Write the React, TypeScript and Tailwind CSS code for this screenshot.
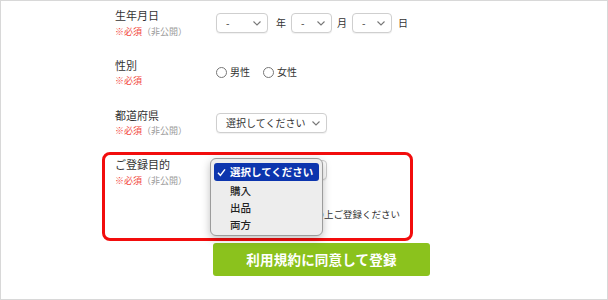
import React from "react";

const Chevron = () => (
  <svg width="8" height="5" viewBox="0 0 8 5" className="shrink-0">
    <polyline points="0.5,0.5 4,4 7.5,0.5" fill="none" stroke="#777" strokeWidth="1.1" />
  </svg>
);

const FakeSelect = ({ w, text }: { w: string; text: string }) => (
  <div
    className={`${w} h-[20px] border border-[#cfcfcf] rounded-[4px] bg-white flex items-center justify-between pl-[9px] pr-[6px] shadow-[0_1px_1px_rgba(0,0,0,0.06)]`}
  >
    <span className="text-[10px] leading-none text-[#333] whitespace-nowrap">{text}</span>
    <Chevron />
  </div>
);

const Required = ({ secret = true }: { secret?: boolean }) => (
  <div className="text-[9px] leading-[14px] whitespace-nowrap">
    <span className="text-[#f2463c]">※必須</span>
    {secret && <span className="text-[#9a9a9a]">（非公開）</span>}
  </div>
);

const Label = ({ text }: { text: string }) => (
  <div className="text-[11px] leading-[18px] text-[#333]">{text}</div>
);

const Radio = ({ label }: { label: string }) => (
  <div className="flex items-center gap-[3px]">
    <div className="w-[11px] h-[11px] rounded-full border border-[#777] bg-white" />
    <span className="text-[10px] leading-[18px] text-[#333]">{label}</span>
  </div>
);

export default function App() {
  return (
    <div
      className="relative w-[608px] h-[300px] border border-[#d8d8d8] bg-white overflow-hidden"
      style={{ fontFamily: '"Noto Sans CJK JP", "Noto Sans", sans-serif' }}
    >
      <div className="pl-[114px]">
        {/* Row 1 */}
        <div className="flex items-start h-[50px]">
          <div className="w-[101px] pt-[5px]">
            <Label text="生年月日" />
            <div className="mt-[1px]">
              <Required />
            </div>
          </div>
          <div className="pt-[12px] flex items-start">
            <FakeSelect w="w-[52px]" text="-" />
            <span className="ml-[8px] text-[10px] leading-[20px] text-[#333]">年</span>
            <div className="ml-[5px]">
              <FakeSelect w="w-[41px]" text="-" />
            </div>
            <span className="ml-[5px] text-[10px] leading-[20px] text-[#333]">月</span>
            <div className="ml-[5px]">
              <FakeSelect w="w-[40px]" text="-" />
            </div>
            <span className="ml-[6px] text-[10px] leading-[20px] text-[#333]">日</span>
          </div>
        </div>

        {/* Row 2 */}
        <div className="flex items-start h-[50px]">
          <div className="w-[101px] pt-[5px]">
            <Label text="性別" />
            <Required secret={false} />
          </div>
          <div className="pt-[12px] flex items-center gap-[13px]">
            <Radio label="男性" />
            <Radio label="女性" />
          </div>
        </div>

        {/* Row 3 */}
        <div className="flex items-start h-[50px]">
          <div className="w-[101px] pt-[5px]">
            <Label text="都道府県" />
            <Required />
          </div>
          <div className="pt-[12px]">
            <FakeSelect w="w-[111px]" text="選択してください" />
          </div>
        </div>

        {/* Row 4 highlighted */}
        <div className="-ml-[13px] mt-[1px] w-[311px] h-[89px] border-[3px] border-[#f20d0d] rounded-[8px] pl-[10px] flex items-start">
          <div className="w-[101px]">
            <Label text="ご登録目的" />
            <div className="mt-[1px]">
              <Required />
            </div>
          </div>
          <div className="flex-1 pt-[5px] pr-[10px]">
            <FakeSelect w="w-[111px]" text="" />
            <div className="mt-[26px] text-right text-[9.5px] leading-[16px] text-[#333] whitespace-nowrap">
              の上ご登録ください
            </div>
          </div>
        </div>

        {/* Button */}
        <div className="ml-[98px] mt-[2px] w-[217px] h-[33px] rounded-[3px] bg-[#8bc21d] flex items-center justify-center">
          <span className="text-white font-bold text-[13.5px] tracking-[0.2px]">利用規約に同意して登録</span>
        </div>
      </div>

      {/* Dropdown popup */}
      <div className="absolute left-[209px] top-[157px] w-[113px] h-[78px] rounded-[6px] border border-[#9c9c9c] bg-[#ededed] shadow-[0_3px_8px_rgba(0,0,0,0.25)] px-[3px] pt-[4px]">
        <div className="h-[18px] rounded-[3px] bg-[#0c35ae] flex items-center pl-[3px]">
          <svg width="9" height="9" viewBox="0 0 9 9" className="shrink-0">
            <polyline points="1,4.8 3.4,7.4 8,1.4" fill="none" stroke="#fff" strokeWidth="1.5" />
          </svg>
          <span className="ml-[4px] text-white text-[10.5px] leading-none font-semibold">選択してください</span>
        </div>
        <div className="pl-[16px] text-[10.5px] text-[#222] font-medium">
          <div className="h-[17px] flex items-center mt-[1px]">購入</div>
          <div className="h-[17px] flex items-center">出品</div>
          <div className="h-[17px] flex items-center">両方</div>
        </div>
      </div>
    </div>
  );
}
